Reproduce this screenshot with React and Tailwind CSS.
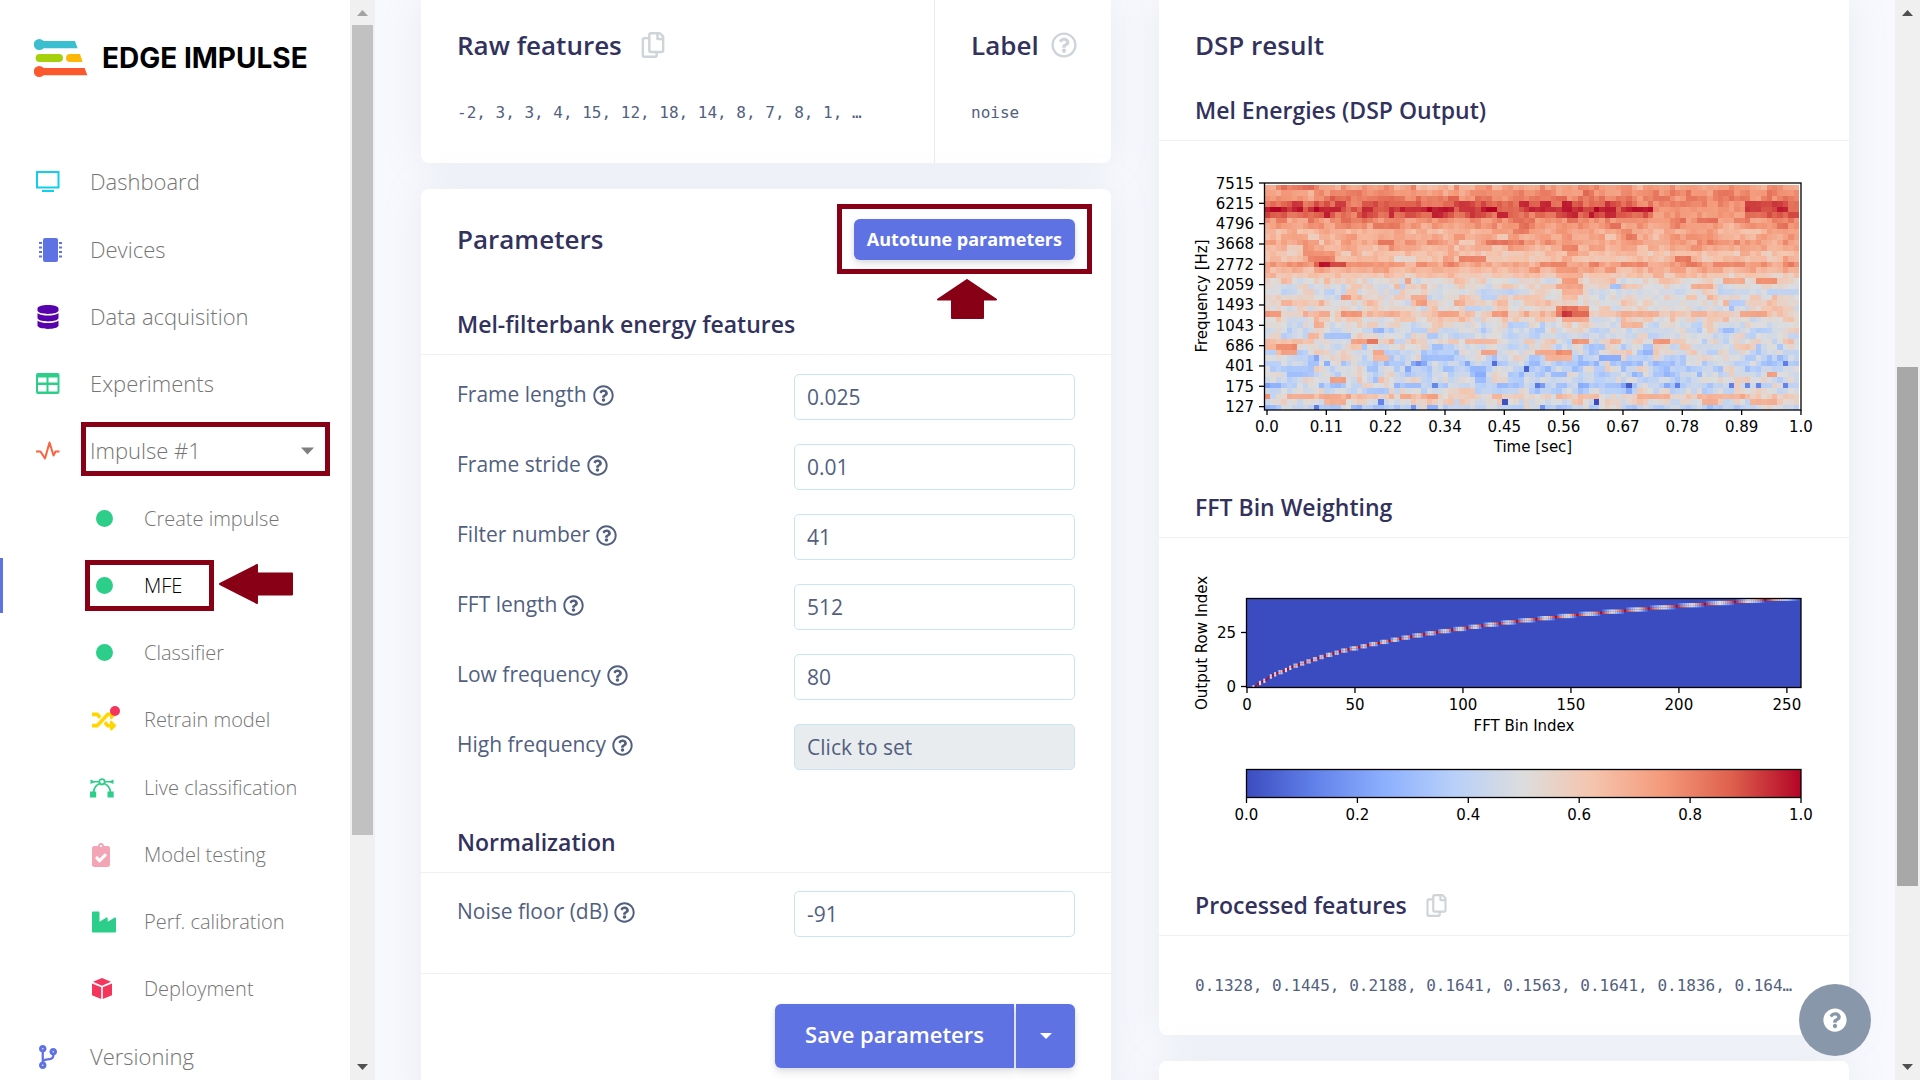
import React from "react";
import {
  FaDatabase, FaRandom, FaClipboardCheck, FaIndustry, FaCodeBranch,
  FaRegCopy, FaRegQuestionCircle, FaQuestionCircle,
} from "react-icons/fa";

/* ---------- icons ---------- */

const Logo = () => (
  <svg width="54" height="38" viewBox="0 0 54 38" aria-hidden="true">
    <circle cx="5.3" cy="5.5" r="5.5" fill="#3bbfd0" />
    <path d="M5 2H41l2.600 7.200H5z" fill="#3bbfd0" />
    <rect x="1.600" y="15" width="27.400" height="8" rx="4" fill="#a4d10c" />
    <path d="M36 15h10l2.600 8H36a4 4 0 0 1 0-8z" fill="#fdb706" />
    <circle cx="5.300" cy="32.500" r="5.500" fill="#fb592d" />
    <path d="M5 29H50.600l2.800 7.200H5z" fill="#fb592d" />
  </svg>
);

const TvIcon = () => (
  <svg width="24" height="22" viewBox="0 0 24 22" aria-hidden="true">
    <rect x="1" y="1" width="21.500" height="15.500" fill="none" stroke="#11cdef" strokeWidth="2" />
    <rect x="6" y="19" width="12" height="2" fill="#11cdef" />
  </svg>
);

const ChipIcon = () => (
  <svg width="26" height="24" viewBox="0 0 26 24" fill="#5e72e4" className="ml-1 shrink-0" aria-hidden="true">
    <rect x="6" y="0" width="15" height="24" rx="2" />
    {[4, 8.500, 13, 17.500].map((y) => (
      <g key={y}>
        <rect x="2" y={y} width="3" height="2" />
        <rect x="22" y={y} width="3" height="2" />
      </g>
    ))}
  </svg>
);

const TableIcon = () => (
  <svg width="24" height="22" viewBox="0 0 24 22" aria-hidden="true">
    <rect x="0" y="0" width="23.500" height="21" rx="2" fill="#2dce89" />
    <path d="M2 4.500h8.500v5H2zM12.500 4.500h9v5h-9zM2 12h8.500v6.500H2zM12.500 12h9v6.500h-9z" fill="#fff" />
  </svg>
);

const PulseIcon = () => (
  <svg width="24" height="20" viewBox="0 0 24 20" aria-hidden="true">
    <path d="M0 10.500h4.500L9 17.500 13.500 1.500 17.500 14.500 19.500 10.500H23.500" fill="none" stroke="#fb6340" strokeWidth="2" strokeLinejoin="round" />
  </svg>
);

const VectorIcon = () => (
  <svg width="24" height="20" viewBox="0 0 24 20" fill="none" stroke="#2dce89" className="-ml-0.5" aria-hidden="true">
    <circle cx="12" cy="3.800" r="2.700" strokeWidth="1.800" />
    <path d="M9.500 3.800H3M14.500 3.800H21" strokeWidth="1.500" />
    <path d="M9.800 5.500C6 7 4 10 3.500 14M14.200 5.500C18 7 20 10 20.500 14" strokeWidth="1.800" />
    <path d="M0.500 1.500l5 2.300-5 2.300zM23.500 1.500l-5 2.300 5 2.300z" fill="#2dce89" stroke="none" />
    <path d="M0 13.500h6.200v6H0zM17.500 13.500h6.200v6h-6.200z" fill="#2dce89" stroke="none" />
  </svg>
);

const BoxIcon = () => (
  <svg width="20" height="22" viewBox="0 0 20 22" fill="#f5365c" aria-hidden="true">
    <path d="M10 0l9 3.700-9 4L1 3.700z" />
    <path d="M0 5.500l9.200 3.800V21L0 17.300z" />
    <path d="M20 5.500l-9.200 3.800V21L20 17.300z" />
  </svg>
);

const Dot = () => <span className="ml-1 block size-[17px] rounded-full bg-[#2dce89]" />;

const RetrainIcon = () => (
  <span className="relative block">
    <FaRandom size={24} color="#ffd600" />
    <span className="absolute -right-1 -top-0.5 size-[10px] rounded-full bg-[#f5365c]" />
  </span>
);

/* ---------- sidebar ---------- */

const NAV = [
  { label: "Dashboard", icon: <TvIcon /> },
  { label: "Devices", icon: <ChipIcon /> },
  { label: "Data acquisition", icon: <FaDatabase size={24} color="#5603ad" /> },
  { label: "Experiments", icon: <TableIcon /> },
  { label: "Impulse #1", icon: <PulseIcon />, menu: true },
  { label: "Create impulse", icon: <Dot />, sub: true },
  { label: "MFE", icon: <Dot />, sub: true, active: true },
  { label: "Classifier", icon: <Dot />, sub: true },
  { label: "Retrain model", icon: <RetrainIcon />, sub: true },
  { label: "Live classification", icon: <VectorIcon />, sub: true },
  { label: "Model testing", icon: <FaClipboardCheck className="h-6 w-[18px]" color="#f3a4b5" />, sub: true },
  { label: "Perf. calibration", icon: <FaIndustry size={24} color="#2dce89" />, sub: true },
  { label: "Deployment", icon: <BoxIcon />, sub: true },
  { label: "Versioning", icon: <FaCodeBranch size={24} color="#5e72e4" /> },
];

const MARK = "pointer-events-none absolute border-[5px] border-[#880015]";

function NavItem({ label, icon, sub, menu, active }) {
  return (
    <li className="relative">
      <a
        href="#"
        aria-current={active ? "page" : undefined}
        className={
          "flex h-[67px] items-center font-[350] " +
          (sub ? "pl-[92px] text-[20px] " : "pl-9 text-[22px] ") +
          (active ? "text-black" : "text-[#757575]")
        }
      >
        <span className={sub ? "flex w-[52px] items-center" : "flex w-[54px] items-center"}>
          <span className={sub ? "flex w-7" : "flex w-6 justify-center"}>{icon}</span>
        </span>
        <span className="flex-1">{label}</span>
        {menu && (
          <svg className="mr-9" width="13" height="8" viewBox="0 0 13 8" aria-hidden="true">
            <path d="M0 0.500h13L6.500 7.500z" fill="#7f7f7f" />
          </svg>
        )}
      </a>
      {menu && <span className={MARK + " left-[81px] right-5 top-[5px] h-[54px]"} />}
      {active && (
        <>
          <span className="absolute left-0 top-1.5 h-[55px] w-[3px] bg-[#5e72e4]" />
          <span className={MARK + " left-[85px] top-2 h-[51px] w-[129px]"} />
          <svg className="pointer-events-none absolute left-[219px] top-3" width="74" height="40" viewBox="0 0 74 40" aria-hidden="true">
            <path d="M1 20L38 1v8.500H73v21H38V39z" fill="#880015" stroke="#880015" strokeWidth="2" strokeLinejoin="round" />
          </svg>
        </>
      )}
    </li>
  );
}

function ScrollTrack({ thumbClass, upColor }) {
  return (
    <div className="relative flex h-full w-[25px] shrink-0 flex-col justify-between bg-[#f0f0f0]" aria-hidden="true">
      <svg width="25" height="25" viewBox="0 0 25 25"><path d="M7 16h11L12.500 10z" fill={upColor} /></svg>
      <div className={"absolute inset-x-0.5 " + thumbClass} />
      <svg width="25" height="25" viewBox="0 0 25 25"><path d="M7 9h11L12.500 15z" fill="#505050" /></svg>
    </div>
  );
}

function Sidebar() {
  return (
    <aside className="flex h-full shrink-0 bg-white">
      <div className="w-[350px] overflow-hidden">
        <a href="#" className="flex h-[148px] items-start gap-3.5 pl-[34px] pt-[39px]">
          <Logo />
          <span className="font-['Inter'] text-[28px] font-bold leading-[38px] text-black">EDGE IMPULSE</span>
        </a>
        <nav>
          <ul className="[&>li:nth-child(4n+2)]:mt-px">{NAV.map((n) => <NavItem key={n.label} {...n} />)}</ul>
        </nav>
      </div>
      <ScrollTrack thumbClass="top-[25px] h-3/4 bg-[#c1c1c1]" upColor="#a3a3a3" />
    </aside>
  );
}

/* ---------- charts ---------- */

const STOPS = [
  [59, 76, 192], [98, 130, 234], [141, 176, 254], [184, 208, 249], [221, 221, 221],
  [245, 196, 173], [244, 154, 123], [222, 96, 77], [180, 4, 38],
];

function coolwarm(v) {
  const t = Math.min(0.9999, Math.max(0, v)) * 8;
  const i = Math.floor(t);
  const f = t - i;
  return "rgb(" + STOPS[i].map((a, k) => Math.round(a + (STOPS[i + 1][k] - a) * f)).join(",") + ")";
}

const COLS = 99;
const ROWS = 41;
const ROW_BASE = [
  0.73, 0.76, 0.8, 0.86, 0.91, 0.87, 0.78, 0.75, 0.69, 0.7, 0.73, 0.68, 0.64, 0.65, 0.73, 0.68, 0.6,
  0.54, 0.52, 0.5, 0.53, 0.55, 0.51, 0.61, 0.55, 0.5, 0.47, 0.46, 0.53, 0.49, 0.46, 0.46, 0.38, 0.43,
  0.44, 0.47, 0.39, 0.47, 0.6, 0.52, 0.43,
];

/* [row, first column, last column, level] */
const EVENTS = [
  [0, 2, 9, 0.83], [1, 15, 17, 0.82], [0, 28, 34, 0.67], [3, 5, 6, 0.93], [3, 13, 14, 0.93], [4, 0, 0, 0.96],
  [4, 1, 2, 1], [4, 3, 3, 0.96], [4, 6, 6, 0.98], [4, 10, 13, 0.96], [4, 26, 29, 0.95], [4, 33, 34, 0.98],
  [4, 40, 40, 0.96], [4, 41, 42, 1], [5, 23, 23, 0.96], [5, 43, 44, 0.95], [3, 47, 48, 0.96], [3, 51, 52, 0.96],
  [4, 49, 52, 0.95], [5, 56, 57, 0.95], [4, 61, 61, 1], [4, 62, 64, 0.96], [4, 66, 67, 0.95], [4, 68, 71, 0.98],
  [3, 72, 88, 0.78], [4, 72, 88, 0.76], [5, 72, 88, 0.75], [3, 89, 93, 0.91], [4, 89, 91, 0.93],
  [4, 92, 93, 0.88], [4, 94, 94, 0.92], [4, 95, 96, 0.96], [4, 97, 98, 0.84], [5, 89, 92, 0.84],
  [6, 8, 8, 0.84], [7, 20, 24, 0.82], [7, 47, 48, 0.84], [7, 64, 65, 0.83],
  [8, 66, 67, 0.78], [8, 46, 48, 0.81], [7, 95, 96, 0.84], [9, 67, 68, 0.82], [9, 8, 9, 0.58], [10, 10, 10, 0.58],
  [10, 21, 23, 0.82], [10, 41, 44, 0.83], [10, 30, 31, 0.78], [10, 26, 27, 0.78], [10, 36, 38, 0.6],
  [11, 7, 8, 0.76], [11, 4, 5, 0.58], [12, 4, 5, 0.56], [12, 7, 12, 0.76], [13, 8, 12, 0.8], [13, 24, 27, 0.53],
  [11, 55, 57, 0.8], [12, 56, 57, 0.74], [13, 36, 40, 0.8], [13, 76, 78, 0.82], [14, 0, 8, 0.75],
  [14, 9, 9, 0.88], [14, 10, 11, 0.98], [14, 12, 14, 0.9], [14, 15, 19, 0.77], [14, 51, 55, 0.79],
  [14, 66, 70, 0.79], [14, 78, 79, 0.82], [14, 83, 88, 0.79], [15, 30, 46, 0.66], [15, 54, 57, 0.75],
  [16, 0, 1, 0.68], [16, 54, 58, 0.68], [17, 26, 26, 0.74], [17, 55, 57, 0.74], [18, 54, 58, 0.72],
  [18, 64, 65, 0.32], [17, 91, 94, 0.78], [17, 85, 88, 0.7], [18, 79, 82, 0.7], [18, 25, 25, 0.38],
  [19, 39, 48, 0.42], [19, 55, 58, 0.68], [19, 60, 72, 0.47], [19, 93, 98, 0.4], [20, 14, 15, 0.75],
  [20, 55, 57, 0.64], [20, 40, 42, 0.38], [20, 27, 29, 0.7], [21, 28, 29, 0.74], [21, 3, 4, 0.67],
  [21, 86, 88, 0.36], [22, 54, 59, 0.78], [22, 55, 57, 0.84], [22, 37, 39, 0.4], [22, 86, 86, 0.32],
  [23, 0, 2, 0.76], [23, 10, 11, 0.7], [23, 14, 17, 0.76], [23, 33, 35, 0.73], [23, 42, 44, 0.75],
  [23, 54, 54, 0.82], [23, 55, 56, 0.93], [23, 57, 59, 0.85], [23, 66, 71, 0.69], [23, 88, 92, 0.72],
  [23, 79, 81, 0.68], [24, 55, 59, 0.7], [25, 9, 10, 0.69], [25, 66, 69, 0.67], [25, 51, 51, 0.35],
  [26, 50, 51, 0.34], [26, 20, 21, 0.28], [27, 11, 15, 0.32], [27, 30, 31, 0.34], [26, 85, 86, 0.3],
  [27, 8, 9, 0.67], [28, 0, 8, 0.63], [28, 16, 20, 0.73], [28, 19, 20, 0.83], [28, 57, 59, 0.76],
  [28, 72, 74, 0.76], [28, 37, 42, 0.66], [29, 0, 1, 0.68], [29, 2, 5, 0.78], [29, 18, 18, 0.35],
  [30, 3, 5, 0.73], [30, 20, 21, 0.7], [30, 40, 42, 0.72], [30, 50, 53, 0.7], [30, 54, 56, 0.77],
  [29, 60, 62, 0.33], [29, 70, 71, 0.33], [30, 29, 35, 0.36], [30, 70, 71, 0.27], [31, 9, 9, 0.22],
  [31, 52, 56, 0.68], [31, 20, 22, 0.66], [31, 29, 34, 0.31], [31, 62, 65, 0.25], [32, 11, 11, 0.24],
  [32, 27, 29, 0.22], [32, 28, 28, 0.16], [32, 37, 37, 0.22], [32, 42, 42, 0.08], [32, 58, 59, 0.28],
  [32, 96, 96, 0.12], [33, 48, 48, 0.04], [33, 26, 26, 0.22], [33, 3, 8, 0.34], [33, 38, 40, 0.28],
  [34, 39, 40, 0.25], [34, 5, 7, 0.32], [34, 53, 55, 0.29], [35, 39, 40, 0.3], [35, 12, 14, 0.73],
  [34, 93, 94, 0.74], [36, 31, 31, 0.14], [36, 50, 50, 0.1], [36, 51, 51, 0.2], [36, 67, 67, 0.04],
  [36, 66, 66, 0.22], [36, 76, 76, 0.13], [36, 86, 86, 0.12], [36, 89, 89, 0.14], [36, 91, 91, 0.12],
  [36, 96, 96, 0.12], [36, 26, 28, 0.3], [37, 67, 67, 0.24], [37, 19, 22, 0.34], [38, 0, 0, 0.76],
  [38, 4, 7, 0.7], [38, 10, 13, 0.71], [38, 69, 74, 0.68], [38, 80, 89, 0.68], [38, 25, 26, 0.7],
  [39, 21, 21, 0.12], [39, 44, 44, 0.01], [39, 61, 61, 0], [39, 12, 14, 0.7], [39, 81, 83, 0.7],
  [39, 90, 94, 0.68], [40, 9, 9, 0.1], [40, 27, 27, 0.18], [40, 30, 31, 0.26], [40, 51, 51, 0.16],
];

function rand(a, b) {
  let h = Math.imul(a + 11, 374761393) ^ Math.imul(b + 7, 668265263);
  h = Math.imul(h ^ (h >>> 13), 1274126177);
  return ((h ^ (h >>> 16)) >>> 0) / 4294967295;
}

function buildEnergies() {
  const grid = [];
  for (let r = 0; r < ROWS; r++) {
    const spread = r < 17 ? 0.12 : r < 28 ? 0.17 : 0.22;
    const row = [];
    for (let c = 0; c < COLS; c++) {
      const pair = rand(r, Math.floor((c + (r % 2)) / 2) + 500);
      const down = rand(Math.floor(r / 3), Math.floor(c / 3) + 900);
      const mix = pair * 0.4 + down * 0.3 + rand(r, c) * 0.3;
      row.push(ROW_BASE[r] + (mix - 0.5) * 2 * spread);
    }
    grid.push(row);
  }
  EVENTS.forEach(([r, a, b, v]) => {
    const jitter = b - a > 5 ? 0.08 : 0.025;
    for (let c = a; c <= b; c++) grid[r][c] = v + (rand(r + 60, c) - 0.5) * jitter;
  });
  return grid;
}

const ENERGIES = buildEnergies();

/* Triangular mel filters, 80 Hz to 8 kHz, over the 257 bins of a 512-point FFT */
function buildFilters() {
  const mel = (f) => 2595 * Math.log10(1 + f / 700);
  const hz = (m) => 700 * (Math.pow(10, m / 2595) - 1);
  const lo = mel(80);
  const hi = mel(8000);
  const pts = Array.from({ length: ROWS + 2 }, (_, i) =>
    Math.floor((513 * hz(lo + ((hi - lo) * i) / (ROWS + 1))) / 16000)
  );
  const cells = [];
  for (let i = 0; i < ROWS; i++) {
    const [a, b, c] = [pts[i], pts[i + 1], pts[i + 2]];
    for (let x = a; x <= Math.min(c, 256); x++) {
      const v = x <= b ? (b > a ? (x - a) / (b - a) : 1) : (c - x) / (c - b);
      if (v > 0.02) cells.push([i, x, v]);
    }
  }
  return cells;
}

const FILTERS = buildFilters();

const CHART = "block w-full overflow-visible font-['DejaVu_Sans',sans-serif] text-[15px]";

function MelChart() {
  const cw = 534 / COLS;
  const ch = 225 / ROWS;
  const freqs = [7515, 6215, 4796, 3668, 2772, 2059, 1493, 1043, 686, 401, 175, 127];
  const times = ["0.0", "0.11", "0.22", "0.34", "0.45", "0.56", "0.67", "0.78", "0.89", "1.0"];
  return (
    <svg viewBox="0 0 618 285" className={CHART} role="img" aria-label="Mel energies">
      <g shapeRendering="crispEdges">
        {ENERGIES.map((row, r) =>
          row.map((v, c) => (
            <rect key={r + "-" + c} x={70 + c * cw} y={10 + r * ch} width={cw} height={ch} fill={coolwarm(v)} />
          ))
        )}
      </g>
      <rect x="69.500" y="8" width="536.500" height="227" fill="none" stroke="#000" strokeWidth="1.300" />
      {freqs.map((f, i) => (
        <g key={f}>
          <path d={`M64 ${8 + i * 20.33}h5`} stroke="#000" strokeWidth="1.300" />
          <text x="59" y={13.500 + i * 20.33} textAnchor="end">{f}</text>
        </g>
      ))}
      {times.map((t, i) => (
        <g key={t}>
          <path d={`M${72 + i * 59.330} 235v5`} stroke="#000" strokeWidth="1.300" />
          <text x={72 + i * 59.330} y="257" textAnchor="middle">{t}</text>
        </g>
      ))}
      <text x="338" y="277" textAnchor="middle">Time [sec]</text>
      <text transform="translate(12 121) rotate(-90)" textAnchor="middle">Frequency [Hz]</text>
    </svg>
  );
}

function FftChart() {
  const cw = 555 / 257;
  const ch = 88.600 / ROWS;
  return (
    <svg viewBox="0 0 618 270" className={CHART} role="img" aria-label="FFT bin weighting">
      <defs>
        <linearGradient id="scale">
          {STOPS.map((s, i) => <stop key={i} offset={i / 8} stopColor={"rgb(" + s.join(",") + ")"} />)}
        </linearGradient>
      </defs>
      <rect x="51" y="38.700" width="555" height="88.600" fill="rgb(59,76,192)" />
      {FILTERS.map(([r, b, v]) => (
        <rect key={r + "-" + b} x={51 + b * cw} y={127.300 - (r + 1) * ch} width={cw} height={ch} fill={coolwarm(v)} />
      ))}
      <rect x="51.500" y="38.500" width="554.500" height="89" fill="none" stroke="#000" strokeWidth="1.300" />
      {[[25, 72], [0, 126]].map(([n, y]) => (
        <g key={n}>
          <path d={`M46 ${y + 0.500}h5`} stroke="#000" strokeWidth="1.300" />
          <text x="41" y={y + 6} textAnchor="end">{n}</text>
        </g>
      ))}
      {[0, 50, 100, 150, 200, 250].map((n) => (
        <g key={n}>
          <path d={`M${52 + n * cw} 127v6`} stroke="#000" strokeWidth="1.300" />
          <text x={52 + n * cw} y="150" textAnchor="middle">{n}</text>
        </g>
      ))}
      <text x="329" y="171" textAnchor="middle">FFT Bin Index</text>
      <text transform="translate(12 83) rotate(-90)" textAnchor="middle">Output Row Index</text>
      <rect x="51.500" y="209.500" width="554.500" height="28" fill="url(#scale)" stroke="#000" strokeWidth="1.300" />
      {["0.0", "0.2", "0.4", "0.6", "0.8", "1.0"].map((t, i) => (
        <g key={t}>
          <path d={`M${51.500 + i * 110.900} 238v5`} stroke="#000" strokeWidth="1.300" />
          <text x={51.500 + i * 110.900} y="260" textAnchor="middle">{t}</text>
        </g>
      ))}
    </svg>
  );
}

/* ---------- cards ---------- */

const CARD = "bg-white shadow-[0_0_40px_rgba(136,152,170,0.15)]";
const MONO = "font-['DejaVu_Sans_Mono',monospace] text-[16px]";
const H2 = "text-[26px] font-[550] text-[#32325d]";
const SHADOW = "shadow-[0_5px_8px_rgba(50,50,93,0.11),0_1px_4px_rgba(0,0,0,0.08)]";

const SectionTitle = ({ children, className }) => (
  <h3 className={"flex items-center gap-[18px] border-b border-[#eff0f2] px-9 pb-2.5 text-[23px] font-[550] leading-10 text-[#32325d] " + className}>
    {children}
  </h3>
);

const CopyButton = ({ size }) => (
  <button type="button" aria-label="Copy" className="text-[#ced4da]"><FaRegCopy size={size} /></button>
);

function Field({ id, label, value, disabled }) {
  return (
    <div className="grid grid-cols-[6fr_5fr] items-center">
      <label htmlFor={id} className="flex items-center gap-1.5 pb-1 text-[21px]">
        {label}
        <FaRegQuestionCircle size={21} />
      </label>
      <input
        id={id}
        type="text"
        defaultValue={value}
        disabled={disabled}
        className="h-[46px] w-full rounded-[5px] border border-[#cbe4f2] bg-white px-3 text-[21px] text-[#525f7f] disabled:bg-[#e9ecef]"
      />
    </div>
  );
}

function RawFeatures() {
  return (
    <section className={CARD + " flex rounded-b-lg"}>
      <div className="min-w-0 flex-1 px-9 pb-[27px]">
        <h2 className={H2 + " flex h-[90px] items-center gap-[18px]"}>Raw features <CopyButton size={26} /></h2>
        <p className={MONO + " leading-[46px]"}>-2, 3, 3, 4, 15, 12, 18, 14, 8, 7, 8, 1, …</p>
      </div>
      <div className="w-[177px] border-l border-[#e9ecef] pl-9">
        <h2 className={H2 + " flex h-[90px] items-center gap-3"}>
          Label <FaRegQuestionCircle size={26} color="#ced4da" />
        </h2>
        <p className={MONO + " leading-[46px]"}>noise</p>
      </div>
    </section>
  );
}

function Parameters() {
  return (
    <section className={CARD + " rounded-t-lg pb-12"}>
      <div className="flex h-[100px] items-center justify-between px-9">
        <h2 className={H2}>Parameters</h2>
        <div className="relative">
          <button type="button" className={"h-[41px] rounded-md bg-[#5e72e4] px-[13px] text-[18px] font-bold text-white " + SHADOW}>
            Autotune parameters
          </button>
          <span className={MARK + " -inset-x-[17px] -top-[15px] h-[70px]"} />
          <svg className="pointer-events-none absolute left-[83px] top-[60px]" width="60" height="40" viewBox="0 0 60 40" aria-hidden="true">
            <path d="M30 1L59 20.500H46V39H15V20.500H1z" fill="#880015" stroke="#880015" strokeWidth="2" strokeLinejoin="round" />
          </svg>
        </div>
      </div>
      <SectionTitle className="mt-[15px]">Mel-filterbank energy features</SectionTitle>
      <div className="flex flex-col gap-6 px-9 pt-[19px]">
        <Field id="frame-length" label="Frame length" value="0.025" />
        <Field id="frame-stride" label="Frame stride" value="0.01" />
        <Field id="filter-number" label="Filter number" value="41" />
        <Field id="fft-length" label="FFT length" value="512" />
        <Field id="low-frequency" label="Low frequency" value="80" />
        <Field id="high-frequency" label="High frequency" value="Click to set" disabled />
      </div>
      <SectionTitle className="mt-[52px]">Normalization</SectionTitle>
      <div className="border-b border-[#eff0f2] px-9 pb-9 pt-[18px]">
        <Field id="noise-floor" label="Noise floor (dB)" value="-91" />
      </div>
      <div className="flex justify-end gap-0.5 px-9 pt-[30px]">
        <button type="button" className={"h-16 rounded-l-md bg-[#5e72e4] px-[30px] pb-1 text-[22px] font-semibold text-white " + SHADOW}>
          Save parameters
        </button>
        <button type="button" aria-label="More save options" className={"flex h-16 w-[59px] items-center justify-center rounded-r-md bg-[#5e72e4] " + SHADOW}>
          <svg width="12" height="6" viewBox="0 0 12 6" aria-hidden="true"><path d="M0 0h12L6 6z" fill="#fff" /></svg>
        </button>
      </div>
    </section>
  );
}

function DspResult() {
  return (
    <section className={CARD + " rounded-b-lg"}>
      <h2 className={H2 + " flex h-[90px] items-center px-9"}>DSP result</h2>
      <SectionTitle className="">Mel Energies (DSP Output)</SectionTitle>
      <div className="px-9 pt-[34px]"><MelChart /></div>
      <SectionTitle className="mt-[27px]">FFT Bin Weighting</SectionTitle>
      <div className="px-9 pt-[22px]"><FftChart /></div>
      <SectionTitle className="mt-[55px]">Processed features <CopyButton size={23} /></SectionTitle>
      <p className={MONO + " truncate px-9 leading-[99px]"}>
        0.1328, 0.1445, 0.2188, 0.1641, 0.1563, 0.1641, 0.1836, 0.164…
      </p>
    </section>
  );
}

export default function App() {
  return (
    <div className="flex h-screen overflow-hidden bg-[#f8f9fe] font-['Open_Sans',sans-serif] text-[#525f7f]">
      <Sidebar />
      <main className="grid min-w-0 flex-1 grid-cols-2 items-start gap-12 overflow-hidden px-[46px]">
        <div className="flex min-w-0 flex-col gap-[26px]">
          <RawFeatures />
          <Parameters />
        </div>
        <div className="flex min-w-0 flex-col gap-[26px]">
          <DspResult />
          <section className={CARD + " h-24 rounded-t-lg"} />
        </div>
      </main>
      <button type="button" aria-label="Help" className="fixed bottom-6 right-[49px] flex size-[72px] items-center justify-center rounded-full bg-[#8898aa] text-white">
        <FaQuestionCircle size={24} />
      </button>
      <ScrollTrack thumbClass="top-[34%] h-[48%] bg-[#a8a8a8]" upColor="#505050" />
    </div>
  );
}
